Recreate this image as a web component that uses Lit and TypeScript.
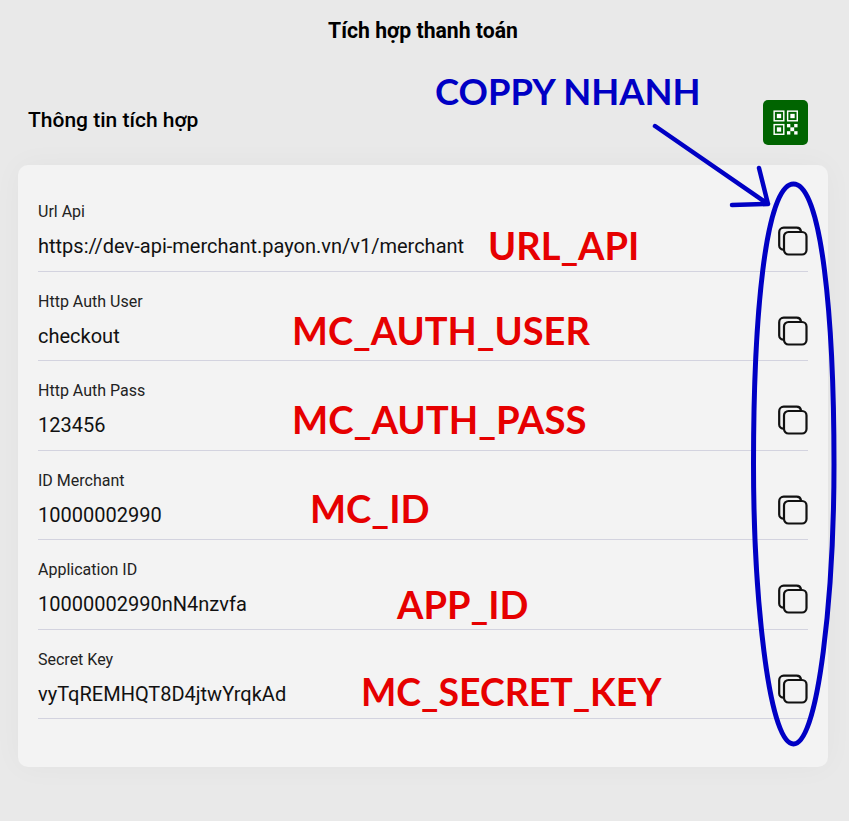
import { LitElement, html, css, svg } from "lit";
import { customElement } from "lit/decorators.js";

const ROWS = [
  { label: "Url Api", value: "https://dev-api-merchant.payon.vn/v1/merchant" },
  { label: "Http Auth User", value: "checkout" },
  { label: "Http Auth Pass", value: "123456" },
  { label: "ID Merchant", value: "10000002990" },
  { label: "Application ID", value: "10000002990nN4nzvfa" },
  { label: "Secret Key", value: "vyTqREMHQT8D4jtwYrqkAd" },
];

const NOTES = [
  { text: "URL_API", x: 488, y: 245, size: 38 },
  { text: "MC_AUTH_USER", x: 292, y: 330, size: 38 },
  { text: "MC_AUTH_PASS", x: 292, y: 419, size: 38.3 },
  { text: "MC_ID", x: 310, y: 508, size: 38.2 },
  { text: "APP_ID", x: 397, y: 604, size: 38 },
  { text: "MC_SECRET_KEY", x: 361, y: 692, size: 37.4 },
];

@customElement("app-root")
export class AppRoot extends LitElement {
  static styles = css`
    :host {
      display: block;
      position: relative;
      width: 849px;
      height: 821px;
      overflow: hidden;
      background: #e9e9e9;
      font-family: Roboto, sans-serif;
      color: #000;
    }
    .page {
      display: flex;
      flex-direction: column;
      padding: 19px 21px 0 18px;
    }
    h1 {
      margin: 0;
      height: 24px;
      font-size: 21.2px;
      line-height: 24px;
      font-weight: 700;
      text-align: center;
    }
    .head {
      display: flex;
      align-items: center;
      justify-content: space-between;
      margin-top: 57px;
      padding: 0 20px 0 10px;
      height: 45px;
    }
    h2 {
      margin: -5px 0 0;
      font-size: 21px;
      font-weight: 500;
    }
    .qr {
      width: 45px;
      height: 45px;
      border-radius: 5px;
      background: #006400;
      display: flex;
      align-items: center;
      justify-content: center;
    }
    .card {
      margin-top: 20px;
      height: 602px;
      box-sizing: border-box;
      background: #f3f3f3;
      border-radius: 10px;
      padding: 17px 20px 0;
      box-shadow: 0 0 30px rgba(0, 0, 0, 0.035);
    }
    .row {
      display: flex;
      align-items: center;
      justify-content: space-between;
      height: 89.5px;
      box-sizing: border-box;
      border-bottom: 1px solid #d3d3df;
    }
    .text {
      padding-top: 8px;
    }
    .label {
      font-size: 16px;
      line-height: 20px;
      color: #222;
    }
    .value {
      margin-top: 12px;
      font-size: 20px;
      line-height: 24px;
      color: #111;
    }
    .copy {
      display: block;
      margin-top: 30px;
    }
    .notes {
      position: absolute;
      inset: 0;
      pointer-events: none;
    }
    .note {
      position: absolute;
      font-family: Lato, sans-serif;
      font-weight: 700;
      font-size: 38px;
      line-height: 40px;
      color: #e60000;
      transform: translateY(-50%);
      white-space: nowrap;
    }
    .note.blue {
      font-size: 36.4px;
      color: #0000c4;
    }
    .ink {
      position: absolute;
      inset: 0;
    }
  `;

  private qrIcon() {
    return html`<svg width="26" height="26" viewBox="0 0 27 27" fill="none">
      <g stroke="#fff" stroke-width="1.5">
        <rect x="1.2" y="1.2" width="10" height="10" />
        <rect x="15.2" y="1.2" width="10" height="10" />
        <rect x="1.2" y="15.2" width="10" height="10" />
      </g>
      <g fill="#fff">
        <rect x="4" y="4" width="4.5" height="4.5" />
        <rect x="18" y="4" width="4.5" height="4.5" />
        <rect x="4" y="18" width="4.5" height="4.5" />
        <rect x="14.5" y="14.5" width="3.5" height="3.5" />
        <rect x="22" y="14.5" width="3.5" height="3.5" />
        <rect x="18" y="18" width="4" height="4" />
        <rect x="14.5" y="22" width="3.5" height="3.5" />
        <rect x="22" y="22" width="3.5" height="3.5" />
      </g>
    </svg>`;
  }

  private copyIcon() {
    return html`<svg class="copy" width="30" height="30" viewBox="0 0 30 30" fill="none" stroke="#111" stroke-width="2.2">
      <path d="M5 23.6 A4 4 0 0 1 1.2 19.6 V6.2 A4.5 4.5 0 0 1 5.7 1.7 H18.6 A4.4 4.4 0 0 1 23 5.2" />
      <rect x="6" y="6" width="22.5" height="22.5" rx="4.5" />
    </svg>`;
  }

  render() {
    return html`
      <div class="page">
        <h1>Tích hợp thanh toán</h1>
        <div class="head">
          <h2>Thông tin tích hợp</h2>
          <div class="qr">${this.qrIcon()}</div>
        </div>
        <div class="card">
          ${ROWS.map(
            (r) => html`<div class="row">
              <div class="text">
                <div class="label">${r.label}</div>
                <div class="value">${r.value}</div>
              </div>
              ${this.copyIcon()}
            </div>`
          )}
        </div>
      </div>
      <svg class="ink" width="849" height="821" viewBox="0 0 849 821" fill="none" stroke="#0000c4" stroke-linecap="round" stroke-linejoin="round">
        ${svg`<path d="M793.5 184 C 765 184 753.5 320 753.5 464 C 753.5 590 768 744 793.5 744 C 819 744 834 590 834 464 C 834 320 822 184 793.5 184 Z" stroke-width="5" />
        <path d="M655 126 L768 204 M759 168 L768 204 L732 205" stroke-width="4.5" />`}
      </svg>
      <div class="notes">
        <div class="note blue" style="left:435px;top:91px">COPPY NHANH</div>
        ${NOTES.map(
          (n) => html`<div class="note" style="left:${n.x}px;top:${n.y}px;font-size:${n.size}px">${n.text}</div>`
        )}
      </div>
    `;
  }
}
